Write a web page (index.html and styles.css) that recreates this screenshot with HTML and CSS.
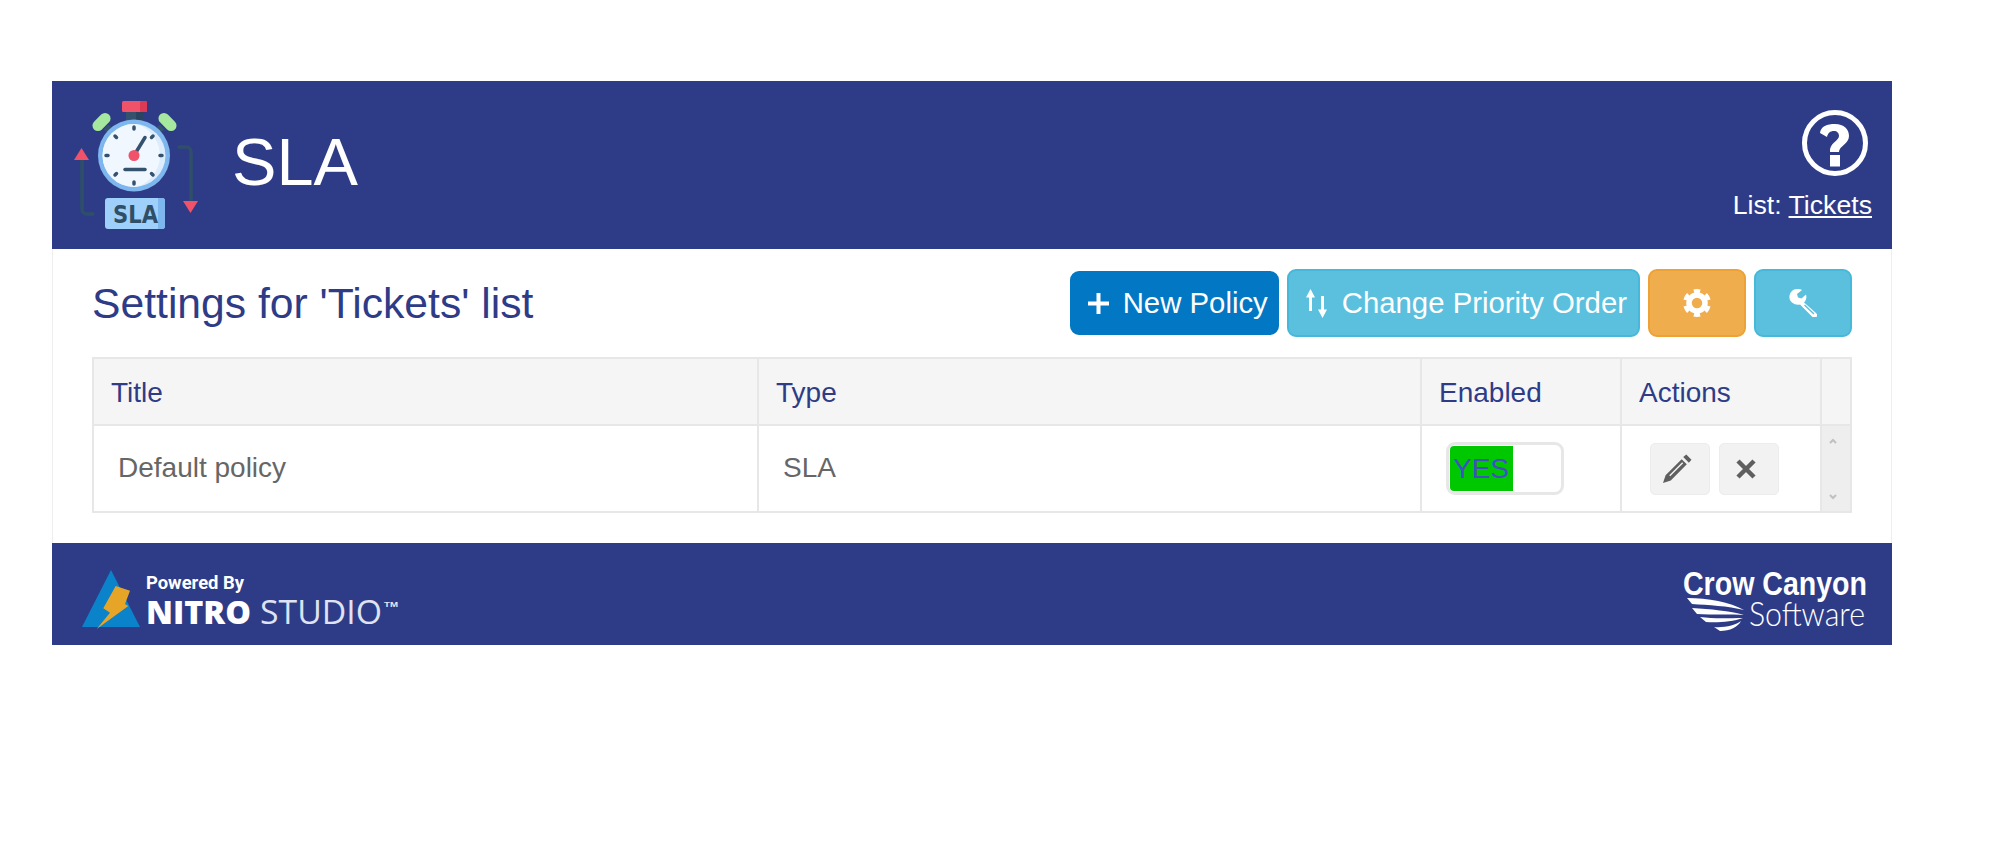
FILE: index.html
```html
<!DOCTYPE html>
<html lang="en">
<head>
<meta charset="utf-8">
<title>SLA</title>
<link rel="stylesheet" href="styles.css">
</head>
<body>
<div class="shell">
  <header class="top">
    <svg class="logo" viewBox="0 0 140 150" aria-hidden="true">
      <rect x="52" y="11" width="25" height="11" rx="1.5" fill="#f0526a"/>
      <rect x="70" y="11" width="7" height="11" rx="1.5" fill="#dc3a55"/>
      <rect x="56" y="22" width="17" height="10" fill="#34516e"/>
      <rect x="66" y="22" width="7" height="10" fill="#2a4360"/>
      <path d="M36 37l9 8M92 37l-9 8" stroke="#34516e" stroke-width="7" fill="none"/>
      <rect x="21" y="26.500" width="21" height="11" rx="5.500" fill="#a6e89e" transform="rotate(-45 31.500 32)"/>
      <rect x="87" y="26.500" width="21" height="11" rx="5.500" fill="#a6e89e" transform="rotate(45 97.500 32)"/>
      <circle cx="64" cy="65.500" r="36" fill="#7eb6ee"/>
      <circle cx="64" cy="65.500" r="31.500" fill="#dcecfc"/>
      <path d="M64 34a31.500 31.500 0 0 0 0 63c11 0 26-14 26-31.500s-15-31.500-26-31.500z" fill="#f1f7fe"/>
      <g stroke="#34516e" stroke-width="3.500" stroke-linecap="round" fill="none">
        <path d="M64 37v2M64 92v2M36 65.500h2M90 65.500h2M45 46l1.500 1.500M83 46l-1.500 1.500M45 85l1.500-1.500M83 85l-1.500-1.500"/>
        <path d="M64 65.500l11-18"/>
        <path d="M55 79.500h20"/>
      </g>
      <circle cx="64" cy="65.500" r="5.500" fill="#f0526a"/>
      <rect x="35" y="108" width="60" height="31" rx="3" fill="#9fd0fb"/>
      <path d="M88 108h4a3 3 0 0 1 3 3v25a3 3 0 0 1-3 3h-4z" fill="#7eb6ee"/>
      <text class="logo-text" x="43" y="133" textLength="45" lengthAdjust="spacingAndGlyphs">SLA</text>
      <path d="M23 124h-6a5 5 0 0 1-5-5V69" stroke="#2f4f68" stroke-width="3.500" fill="none" stroke-linecap="round"/>
      <path d="M4 70h15L11.500 58z" fill="#f0526a"/>
      <path d="M109 57h7a5 5 0 0 1 5 5v50" stroke="#2f4f68" stroke-width="3.500" fill="none" stroke-linecap="round"/>
      <path d="M113 111h15l-7.500 12z" fill="#f0526a"/>
    </svg>
    <h1 class="app-title">SLA</h1>
    <div class="top-right">
      <svg class="help" viewBox="0 0 66 66" aria-hidden="true">
        <circle cx="33" cy="33" r="30.500" fill="none" stroke="#fff" stroke-width="5"/>
        <path d="M18 23C19 16 25 14 33 14c9 0 14 5 14 12 0 8-10 10-10 16h-9c-1-9 9-11 9-16 0-3-2-5-5-5-4 0-6 2-7 6zM28 45h10v11.500H28z" fill="#fff"/>
      </svg>
      <div class="list-line">List: <a class="list-link" href="#">Tickets</a></div>
    </div>
  </header>
  <main class="content">
    <div class="toolbar">
      <h2 class="settings-title">Settings for 'Tickets' list</h2>
      <div class="actions">
        <button class="btn btn-primary">
          <svg class="ico-plus" viewBox="0 0 21 21"><path d="M8.500 0h4v8.500H21v4h-8.500V21h-4v-8.500H0v-4h8.500z" fill="#fff"/></svg>New Policy
        </button>
        <button class="btn btn-info btn-wide">
          <svg class="ico-sort" viewBox="0 0 21 29"><path d="M4.500 0L9 8.500H6V22H3V8.500H0zM16.500 29L12 20.500h3V7h3v13.500h3z" fill="#fff"/></svg>Change Priority Order
        </button>
        <button class="btn btn-warn btn-icon" aria-label="Settings">
          <svg class="ico-tool" viewBox="0 0 28 28" fill="none" stroke="#fff">
            <circle cx="14" cy="14" r="8" stroke-width="5.500"/>
            <circle cx="14" cy="14" r="12" stroke-width="4" pathLength="60" stroke-dasharray="5 5" stroke-dashoffset="7.500"/>
          </svg>
        </button>
        <button class="btn btn-info btn-icon" aria-label="Tools">
          <svg class="ico-tool" viewBox="0 0 28 28"><path fill="#fff" fill-rule="evenodd" d="M4 1c3-1.500 7-1 9 0L8 5l1 3.500 3.500 1 4.500-4c1 3 0 6-2 8l12 10.500c1.500 1.500 1.500 3 .5 4s-3 1-4 0L11 15.500C6 16.500 1 13.500.500 9 0 6 1.500 3 4 1zM16 15.500l9.500 9-1 1-9.500-9z"/></svg>
        </button>
      </div>
    </div>
    <table class="grid">
      <thead>
        <tr><th class="col-title">Title</th><th class="col-type">Type</th><th class="col-enabled">Enabled</th><th class="col-actions">Actions</th><th class="col-scroll"></th></tr>
      </thead>
      <tbody>
        <tr>
          <td class="cell-text">Default policy</td>
          <td class="cell-text">SLA</td>
          <td class="cell-toggle"><span class="toggle"><span class="toggle-on">YES</span></span></td>
          <td class="cell-actions">
            <span class="row-actions">
              <button class="mini" aria-label="Edit"><svg class="ico-mini" viewBox="0 0 28 28"><path fill="#5f5f5f" fill-rule="evenodd" d="M22.500.500l5 5-2.500 3-5.500-5.500zM18 5l5 5L7.500 25.500 0 28l2.500-7.500zM6 20.500L18.500 8l1 1L7 21.500z"/></svg></button>
              <button class="mini" aria-label="Delete"><svg class="ico-x" viewBox="0 0 20 20"><path d="M2 2l16 16M18 2L2 18" stroke="#5f5f5f" stroke-width="4.500" fill="none"/></svg></button>
            </span>
          </td>
          <td class="cell-scroll">
            <span class="scroll-track">
              <svg class="chev" viewBox="0 0 8 6"><path d="M1 5l3-3 3 3" stroke="#c0c0c0" stroke-width="2" fill="none"/></svg>
              <svg class="chev" viewBox="0 0 8 6"><path d="M1 1l3 3 3-3" stroke="#c0c0c0" stroke-width="2" fill="none"/></svg>
            </span>
          </td>
        </tr>
      </tbody>
    </table>
  </main>
  <footer class="bottom">
    <svg class="nitro" viewBox="0 -12 325 94" aria-hidden="true">
      <path d="M0 68L29 11l29 57z" fill="#0b83cb"/>
      <path d="M33.700 27L48 31.700 43 45l3.300 2L14.700 70 28 53.700 21.300 49.300z" fill="#e6a527"/>
      <text class="nitro-small" x="64" y="30" textLength="98" lengthAdjust="spacingAndGlyphs">Powered By</text>
      <text class="nitro-big" x="64" y="65" textLength="105" lengthAdjust="spacingAndGlyphs">NITRO</text>
      <text class="nitro-light" x="178" y="65" textLength="122" lengthAdjust="spacingAndGlyphs">STUDIO</text>
      <text class="nitro-tm" x="302" y="48" textLength="14" lengthAdjust="spacingAndGlyphs">TM</text>
    </svg>
    <svg class="crow" viewBox="0 -12 214 94" aria-hidden="true">
      <text class="crow-big" x="5" y="36" textLength="184" lengthAdjust="spacingAndGlyphs">Crow Canyon</text>
      <text class="crow-light" x="71" y="67" textLength="116" lengthAdjust="spacingAndGlyphs">Software</text>
      <path d="M9 39C30 39 52 43 66 51 50 47 30 46 14 45zM14 49C32 50 52 52 66 56 54 55 34 56 19 55zM22 58C36 60 52 59 65 59 54 63 38 64 28 63zM36 68C46 69 58 66 63 62 60 68 52 72 42 72z" fill="#fff"/>
    </svg>
  </footer>
</div>
</body>
</html>
```
FILE: styles.css
```css
* { box-sizing: border-box; }
html, body { margin: 0; padding: 0; background: #fff; }
body {
  font-family: "Liberation Sans", Arial, sans-serif;
  color: #2e3c88;
}
.shell {
  width: 1840px;
  margin: 81px 0 0 52px;
}
.top {
  height: 168px;
  background: #2e3c88;
  display: flex;
  align-items: center;
  padding-left: 18px;
  color: #fff;
}
.logo { width: 140px; height: 150px; flex: none; }
.app-title {
  margin: 0 0 5px 22px;
  font-size: 66.67px;
  font-weight: 400;
  line-height: 1;
}
.top-right {
  margin-left: auto;
  padding-right: 20px;
  display: flex;
  flex-direction: column;
  align-items: flex-end;
  gap: 13px;
}
.help { width: 66px; height: 66px; margin-right: 4px; }
.list-line { font-size: 26.67px; line-height: 32px; }
.list-link { color: #fff; text-decoration: underline; }
.content {
  background: #fff;
  border: 1px solid #eeeeee;
  border-width: 0 1px;
  padding: 20px 39px 30px 39px;
}
.toolbar {
  display: flex;
  align-items: center;
  justify-content: space-between;
  height: 68px;
  margin-bottom: 20px;
}
.settings-title {
  margin: 0;
  font-size: 42.67px;
  font-weight: 400;
  color: #2e3c88;
}
.actions { display: flex; align-items: center; gap: 8px; }
.btn {
  font-family: inherit;
  font-size: 29.33px;
  color: #fff;
  height: 68px;
  border: 2px solid transparent;
  border-radius: 9px;
  padding: 0 9px 0 16px;
  display: inline-flex;
  align-items: center;
  gap: 14px;
}
.btn-primary { background: #0277c3; border-color: #0277c3; height: 64px; }
.btn-info { background: #5bc0de; border-color: #46b8da; }
.btn-warn { background: #f0ad4e; border-color: #eea236; }
.btn-wide { padding: 0 11px 0 17px; gap: 15px; }
.btn-icon { width: 98px; justify-content: center; padding: 0; }
.ico-plus { width: 21px; height: 21px; }
.ico-sort { width: 21px; height: 29px; }
.ico-tool { width: 28px; height: 28px; }
.grid {
  width: 1760px;
  table-layout: fixed;
  border-collapse: collapse;
  border: 2px solid #e7e7e7;
  font-size: 28px;
}
.grid th, .grid td { border: 2px solid #e7e7e7; }
.grid th {
  background: #f5f5f5;
  font-weight: 400;
  text-align: left;
  height: 67px;
  padding: 2px 17px 0;
  color: #2e3c88;
}
.col-title { width: 665px; }
.col-type { width: 663px; }
.col-enabled { width: 200px; }
.col-actions { width: 200px; }
.grid td { height: 87px; padding: 0; color: #666; }
.grid .cell-text { padding: 0 0 2px 24px; }
.grid .cell-toggle { padding-left: 24px; }
.toggle {
  display: block;
  width: 118px;
  height: 53px;
  border: 3px solid #e7e7e7;
  border-radius: 9px;
  background: #fff;
  padding: 1px;
}
.toggle-on {
  display: block;
  width: 63px;
  height: 45px;
  background: #00c800;
  border-radius: 4px 0 0 4px;
  color: #3f50c0;
  line-height: 45px;
  padding-left: 3px;
}
.row-actions { display: flex; gap: 9px; padding-left: 28px; }
.mini {
  width: 60px;
  height: 52px;
  background: #f2f2f2;
  border: 1px solid #ececec;
  border-radius: 5px;
  padding: 0 6px 0 0;
  display: inline-flex;
  align-items: center;
  justify-content: center;
}
.ico-mini { width: 29px; height: 29px; }
.ico-x { width: 20px; height: 20px; }
.grid .cell-scroll { background: #eeeeee; border-left-color: #eeeeee; padding-right: 6px; }
.scroll-track {
  display: flex;
  flex-direction: column;
  align-items: center;
  justify-content: space-between;
  height: 62px;
}
.chev { width: 8px; height: 6px; }
.logo-text { font: 700 24px "DejaVu Sans", sans-serif; fill: #2f4f68; }
.bottom {
  height: 102px;
  background: #2e3c88;
  display: flex;
  align-items: center;
  justify-content: space-between;
  padding: 0 0 0 30px;
}
.nitro { width: 325px; height: 94px; }
.crow { width: 214px; height: 94px; }
.nitro-small { font: 700 19px "Roboto", sans-serif; fill: #fff; }
.nitro-big { font: 800 32px "Open Sans", sans-serif; fill: #fff; }
.nitro-light { font: 400 32px "Open Sans", sans-serif; fill: #dfe2f0; }
.nitro-tm { font: 700 8px "Liberation Sans", sans-serif; fill: #e6e8f2; }
.crow-big { font: 700 33.500px "Liberation Sans", sans-serif; fill: #fff; }
.crow-light { font: 300 33px "Lato", sans-serif; fill: #fff; }
```
